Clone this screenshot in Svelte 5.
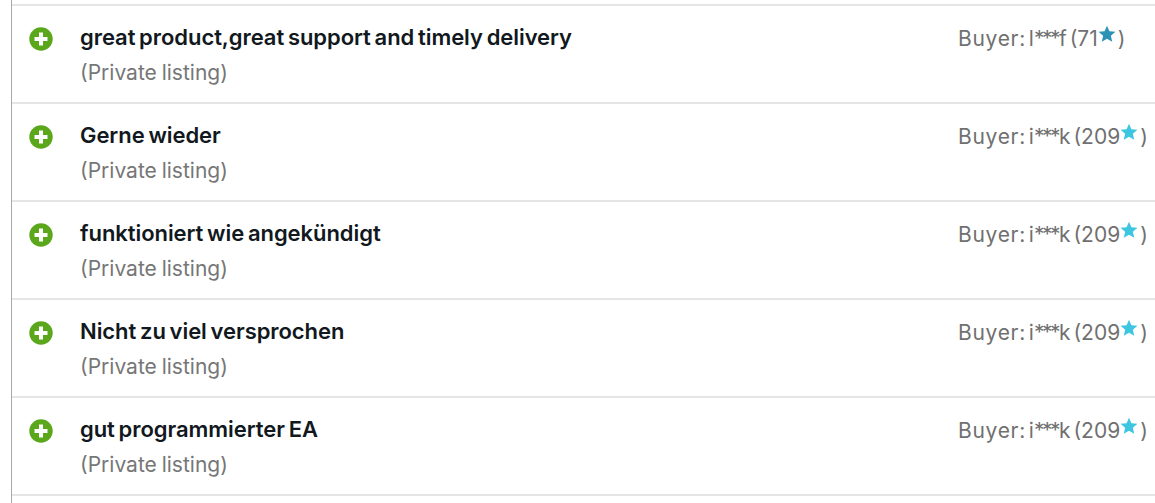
<script>
  const reviews = [
    { title: "great product,great support and timely delivery", first: "l", last: "f", score: 71, star: "#2b93b5" },
    { title: "Gerne wieder", first: "i", last: "k", score: 209, star: "#3ec6e0" },
    { title: "funktioniert wie angekündigt", first: "i", last: "k", score: 209, star: "#3ec6e0" },
    { title: "Nicht zu viel versprochen", first: "i", last: "k", score: 209, star: "#3ec6e0" },
    { title: "gut programmierter EA", first: "i", last: "k", score: 209, star: "#3ec6e0" }
  ];
</script>

<div class="list">
  {#each reviews as r}
    <div class="row">
      <svg class="plus" viewBox="0 0 24 24" width="24" height="24">
        <circle cx="12" cy="12" r="11.7" fill="#5ba71b" />
        <path d="M12 5.5v13M5.5 12h13" stroke="#fff" stroke-width="4" />
      </svg>
      <div class="body">
        <div class="title">{r.title}</div>
        <div class="sub">(Private listing)</div>
      </div>
      <div class="buyer">
        <span class="label">Buyer:</span> {r.first}<span class="mask">***</span>{r.last} ({r.score}<svg class="star" viewBox="0 0 20 20" width="18" height="18">
          <path d="M10 .8l2.7 6.2 6.7.6-5.1 4.4 1.5 6.6L10 15.2l-5.8 3.4 1.5-6.6L.6 7.6l6.7-.6z" fill={r.star} />
        </svg>)
      </div>
    </div>
  {/each}
</div>

<style>
  :global(body) {
    background: #fff;
    overflow: hidden;
  }
  .list {
    margin-left: 11px;
    padding-top: 4px;
    height: 499px;
    border-left: 1px solid #a8a8a8;
    font-family: Inter, "Liberation Sans", sans-serif;
  }
  .row {
    display: flex;
    height: 96px;
    border-top: 2px solid #e5e5e5;
  }
  .row:last-child {
    border-bottom: 2px solid #e5e5e5;
  }
  .plus {
    flex: none;
    margin: 21px 0 0 17px;
  }
  .body {
    flex: 1;
    margin-left: 27px;
    padding-top: 17px;
  }
  .title {
    font-size: 22px;
    font-weight: 600;
    line-height: 28px;
    letter-spacing: -0.06px;
    word-spacing: -1.7px;
    color: #111820;
  }
  .sub {
    margin-top: 8px;
    font-size: 21px;
    line-height: 28px;
    word-spacing: -1px;
    color: #767676;
  }
  .buyer {
    width: 197px;
    flex: none;
    padding-top: 19px;
    font-size: 21px;
    line-height: 28px;
    word-spacing: -3px;
    color: #707070;
    white-space: nowrap;
  }
  .label {
    letter-spacing: 0.7px;
  }
  .mask {
    letter-spacing: -2.5px;
    margin-right: 1px;
  }
  .star {
    vertical-align: 3px;
    margin: 0 2px 0 0;
  }
</style>
